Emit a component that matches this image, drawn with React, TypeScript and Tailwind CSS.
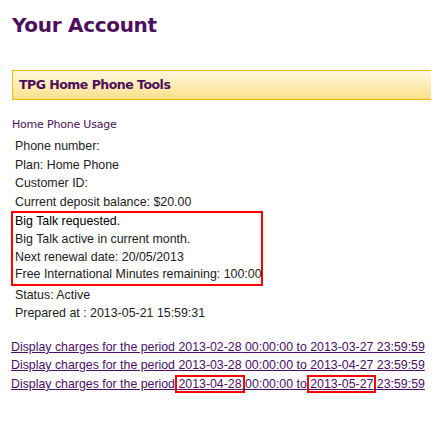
const details = [
  "Phone number:",
  "Plan: Home Phone",
  "Customer ID:",
  "Current deposit balance: $20.00",
];

const bigTalk = [
  "Big Talk requested.",
  "Big Talk active in current month.",
  "Next renewal date: 20/05/2013",
  "Free International Minutes remaining: 100:00",
];

const periods = [
  ["2013-02-28", "2013-03-27"],
  ["2013-03-28", "2013-04-27"],
];

export default function App() {
  return (
    <div className="w-[438px] h-[428px] bg-white overflow-hidden">
      <h1 className="pl-[12px] pt-[12px] text-[20px] leading-[26px] font-bold text-[#4d0f5c] font-['DejaVu_Sans',sans-serif] tracking-[-0.3px]">
        Your Account
      </h1>

      <div className="mt-[32px] ml-[12px] w-[419px] h-[30px] flex items-center pl-[6px] border border-r-0 border-[#f7b900] bg-gradient-to-b from-[#fff8de] to-[#ffe08a]">
        <span className="text-[12.5px] font-bold text-[#4d0f5c] font-['DejaVu_Sans',sans-serif] tracking-[-0.5px]">
          TPG Home Phone Tools
        </span>
      </div>

      <div className="mt-[18px] pl-[12px] text-[11px] leading-[14px] text-[#4d0f5c] font-['DejaVu_Sans',sans-serif] tracking-[-0.2px]">
        Home Phone Usage
      </div>

      <div className="mt-[5px] font-['Liberation_Sans',Arial,sans-serif] text-[12.4px] text-[#222] whitespace-nowrap">
        {details.map((line) => (
          <div key={line} className="pl-[15px] leading-[18.6px]">
            {line}
          </div>
        ))}
        <div className="ml-[11px] w-[252px] border-2 border-[#ff0000]">
          {bigTalk.map((line, i) => (
            <div
              key={line}
              className={
                "pl-[2px] leading-[17.6px] " + (i === 0 ? "text-black" : "")
              }
            >
              {line}
            </div>
          ))}
        </div>
        <div className="pl-[15px] leading-[18.6px]">Status: Active</div>
        <div className="pl-[15px] leading-[18.6px]">
          Prepared at : 2013-05-21 15:59:31
        </div>
      </div>

      <div className="mt-[15px] pl-[11px] font-['Liberation_Sans',Arial,sans-serif] text-[12.35px] text-[#4b0f66] whitespace-nowrap">
        {periods.map(([from, to]) => (
          <div key={from} className="leading-[18px]">
            <a href="#" className="underline">
              Display charges for the period {from} 00:00:00 to {to} 23:59:59
            </a>
          </div>
        ))}
        <div className="leading-[18px] mt-[1px]">
          <a href="#" className="underline">
            Display charges for the period{" "}
            <span className="border-2 border-[#ff0000] px-[1px] -mx-[3px]">
              2013-04-28
            </span>{" "}
            00:00:00 to{" "}
            <span className="border-2 border-[#ff0000] px-[1px] -mx-[3px]">
              2013-05-27
            </span>{" "}
            23:59:59
          </a>
        </div>
      </div>
    </div>
  );
}
